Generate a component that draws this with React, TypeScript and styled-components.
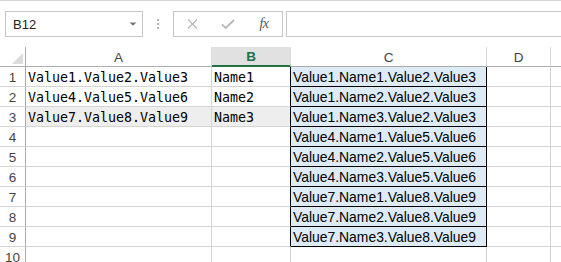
import React from "react";
import styled, { createGlobalStyle } from "styled-components";

const GlobalStyle = createGlobalStyle`
  html, body { margin: 0; padding: 0; background: #fff; overflow: hidden; }
  body { font-family: "Liberation Sans", Arial, sans-serif; }
  * { box-sizing: border-box; }
`;

const Page = styled.div`
  width: 561px;
  height: 262px;
  overflow: hidden;
  background: #fff;
`;

const FormulaBar = styled.div`
  display: flex;
  align-items: stretch;
  border-top: 1px solid #d5d5d5;
  padding: 10px 0 0 5px;
  height: 37px;
`;

const NameBox = styled.div`
  width: 138px;
  height: 26px;
  border: 1px solid #c6c6c6;
  display: flex;
  align-items: center;
  padding: 0 5px 0 7px;
  font-size: 13px;
  color: #222;
`;

const NameText = styled.span`
  flex: 1;
`;

const Dots = styled.div`
  width: 30px;
  display: flex;
  flex-direction: column;
  align-items: center;
  justify-content: center;
  gap: 2px;
`;

const Dot = styled.div`
  width: 2px;
  height: 2px;
  background: #b4b4b4;
`;

const FxBox = styled.div`
  width: 110px;
  height: 26px;
  border: 1px solid #c6c6c6;
  display: flex;
`;

const IconSlot = styled.div`
  flex: 1;
  display: flex;
  align-items: center;
  justify-content: center;
`;

const FxText = styled.span`
  font-family: "Liberation Serif", "Times New Roman", serif;
  font-style: italic;
  font-size: 14px;
  color: #555;
  letter-spacing: -0.5px;
`;

const FormulaInput = styled.div`
  flex: 1;
  height: 26px;
  margin-left: 3px;
  margin-right: -6px;
  border: 1px solid #c6c6c6;
`;

const Sheet = styled.div`
  margin-top: 10px;
  display: grid;
  grid-template-columns: 26px 186px 79px 196px 64px 40px;
  grid-auto-rows: 20px;
`;

const Corner = styled.div`
  border-right: 1px solid #ababab;
  border-bottom: 1px solid #ababab;
  display: flex;
  align-items: flex-end;
  justify-content: flex-end;
  padding: 0 2px 2px 0;
`;

const ColHeader = styled.div<{ $selected?: boolean }>`
  border-right: 1px solid #dadada;
  border-bottom: ${(p) => (p.$selected ? "2px solid #217346" : "1px solid #ababab")};
  background: ${(p) => (p.$selected ? "#e1e1e1" : "#fff")};
  color: ${(p) => (p.$selected ? "#217346" : "#444")};
  font-weight: ${(p) => (p.$selected ? "bold" : "normal")};
  font-size: 13.5px;
  display: flex;
  align-items: center;
  justify-content: center;
  padding-top: 1px;
`;

const RowHeader = styled.div`
  border-right: 1px solid #ababab;
  border-bottom: 1px solid #d4d4d4;
  color: #444;
  font-size: 13.5px;
  display: flex;
  align-items: center;
  justify-content: center;
  padding-top: 1px;
`;

const Cell = styled.div<{ $mono?: boolean; $shade?: boolean; $boxed?: boolean; $edge?: boolean }>`
  border-right: 1px solid ${(p) => (p.$boxed || p.$edge ? "#000" : "#d4d4d4")};
  border-bottom: 1px solid ${(p) => (p.$boxed ? "#000" : "#d4d4d4")};
  background: ${(p) => (p.$boxed ? "#ddebf7" : p.$shade ? "#eeeeee" : "#fff")};
  padding: 1px 0 0 2px;
  line-height: 19px;
  white-space: nowrap;
  overflow: hidden;
  color: #000;
  font-family: ${(p) =>
    p.$mono ? '"DejaVu Sans Mono", "Liberation Mono", monospace' : '"Liberation Sans", Arial, sans-serif'};
  font-size: ${(p) => (p.$mono ? "13.3px" : "13.9px")};
`;

const colA = ["Value1.Value2.Value3", "Value4.Value5.Value6", "Value7.Value8.Value9"];
const colB = ["Name1", "Name2", "Name3"];
const colC = [
  "Value1.Name1.Value2.Value3",
  "Value1.Name2.Value2.Value3",
  "Value1.Name3.Value2.Value3",
  "Value4.Name1.Value5.Value6",
  "Value4.Name2.Value5.Value6",
  "Value4.Name3.Value5.Value6",
  "Value7.Name1.Value8.Value9",
  "Value7.Name2.Value8.Value9",
  "Value7.Name3.Value8.Value9",
];

export default function App() {
  const rows = Array.from({ length: 10 }, (_, i) => i);
  return (
    <Page>
      <GlobalStyle />
      <FormulaBar>
        <NameBox>
          <NameText>B12</NameText>
          <svg width="8" height="4" viewBox="0 0 8 4">
            <path d="M0.5 0.5 L7.5 0.5 L4 3.8 Z" fill="#777" />
          </svg>
        </NameBox>
        <Dots>
          <Dot />
          <Dot />
          <Dot />
        </Dots>
        <FxBox>
          <IconSlot>
            <svg width="11" height="10" viewBox="0 0 11 10">
              <path d="M1 0.5 L10 9.5 M10 0.5 L1 9.5" stroke="#b8b8b8" strokeWidth="1.3" fill="none" />
            </svg>
          </IconSlot>
          <IconSlot>
            <svg width="14" height="10" viewBox="0 0 14 10">
              <path d="M1 5.5 L4.8 9 L13 1" stroke="#b8b8b8" strokeWidth="1.8" fill="none" />
            </svg>
          </IconSlot>
          <IconSlot>
            <FxText>fx</FxText>
          </IconSlot>
        </FxBox>
        <FormulaInput />
      </FormulaBar>
      <Sheet>
        <Corner>
          <svg width="11" height="11" viewBox="0 0 11 11">
            <path d="M11 0 L11 11 L0 11 Z" fill="#dcdcdc" />
          </svg>
        </Corner>
        <ColHeader>A</ColHeader>
        <ColHeader $selected>B</ColHeader>
        <ColHeader>C</ColHeader>
        <ColHeader>D</ColHeader>
        <ColHeader />
        {rows.map((i) => (
          <React.Fragment key={i}>
            <RowHeader>{i + 1}</RowHeader>
            <Cell $mono $shade={i === 2}>
              {colA[i] ?? ""}
            </Cell>
            <Cell $mono $shade={i === 2} $edge={i < 9}>
              {colB[i] ?? ""}
            </Cell>
            <Cell $boxed={i < 9}>{colC[i] ?? ""}</Cell>
            <Cell />
            <Cell />
          </React.Fragment>
        ))}
      </Sheet>
    </Page>
  );
}
